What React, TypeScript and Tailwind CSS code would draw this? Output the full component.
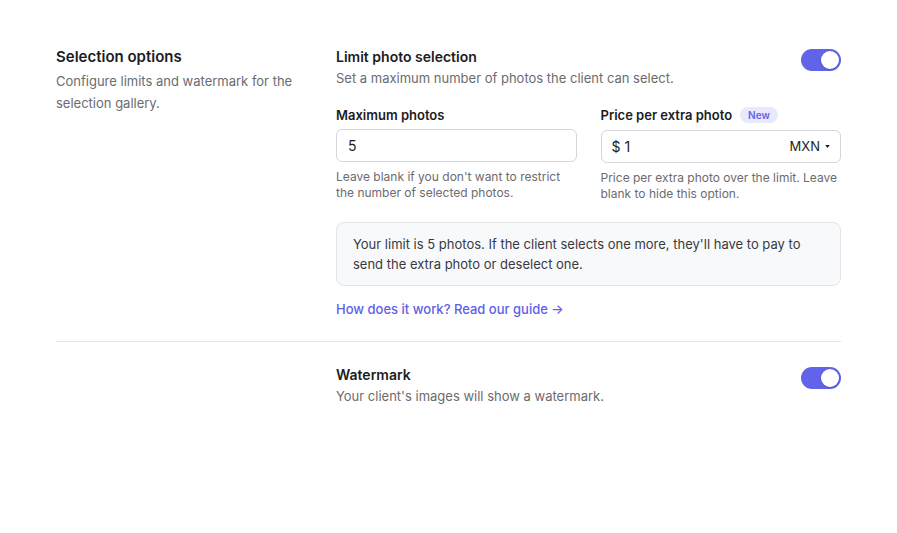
import { useState } from 'react';

function Toggle({ on, onChange }: { on: boolean; onChange: () => void }) {
  return (
    <button
      type="button"
      onClick={onChange}
      className={`relative h-[22px] w-10 shrink-0 rounded-full transition-colors ${
        on ? 'bg-[#6163e8]' : 'bg-[#d4d4d8]'
      }`}
    >
      <span
        className={`absolute top-[2px] h-[18px] w-[18px] rounded-full bg-white shadow-sm transition-all ${
          on ? 'left-[20px]' : 'left-[2px]'
        }`}
      />
    </button>
  );
}

export default function App() {
  const [limit, setLimit] = useState(true);
  const [watermark, setWatermark] = useState(true);
  const [max, setMax] = useState('5');
  const [price, setPrice] = useState('1');

  const summary = `Your limit is ${max || 0} photos. If the client selects one more, they'll have to pay to send the extra photo or deselect one.`;

  return (
    <div className="min-h-screen bg-white px-14 font-['Inter',sans-serif] text-[#1c1c1e] antialiased">
      <div className="grid grid-cols-[280px_1fr] border-b border-[#e5e5e7] pt-[47px] pb-[22px]">
        <div>
          <h2 className="text-[15px] leading-5 font-semibold">Selection options</h2>
          <p className="mt-[3px] w-[240px] text-[13px] leading-[22px] text-[#6b6b70]">
            Configure limits and watermark for the selection gallery.
          </p>
        </div>

        <div>
          <div className="flex items-start justify-between">
            <div>
              <h3 className="text-[14px] leading-5 font-semibold">Limit photo selection</h3>
              <p className="mt-[1px] text-[13px] leading-5 text-[#6b6b70]">
                Set a maximum number of photos the client can select.
              </p>
            </div>
            <div className="pt-[2px]">
              <Toggle on={limit} onChange={() => setLimit(!limit)} />
            </div>
          </div>

          <div className="mt-[17px] grid grid-cols-2 gap-6">
            <div>
              <label className="block text-[13px] leading-5 font-semibold">Maximum photos</label>
              <input
                value={max}
                onChange={(e) => setMax(e.target.value)}
                className="mt-1 h-[33px] w-full rounded-md border border-[#d6d6da] px-[11px] text-[14px] outline-none"
              />
              <p className="mt-[7px] text-[12px] leading-4 text-[#6b6b70]">
                Leave blank if you don't want to restrict the number of selected photos.
              </p>
            </div>
            <div>
              <div className="flex items-center gap-2">
                <label className="text-[13px] leading-5 font-semibold">Price per extra photo</label>
                <span className="rounded-full bg-[#e9e9fd] px-2 text-[10px] leading-4 font-semibold text-[#6163e8]">
                  New
                </span>
              </div>
              <div className="mt-[5px] flex h-[33px] items-center rounded-md border border-[#d6d6da] px-[10px] text-[14px]">
                <span>$</span>
                <input
                  value={price}
                  onChange={(e) => setPrice(e.target.value)}
                  className="ml-1 min-w-0 flex-1 outline-none"
                />
                <span className="text-[13px]">MXN</span>
                <svg viewBox="0 0 6 4" className="ml-[5px] h-[3px] w-[5px] fill-[#1c1c1e]">
                  <path d="M0 0h6L3 4z" />
                </svg>
              </div>
              <p className="mt-[7px] text-[12px] leading-4 text-[#6b6b70]">
                Price per extra photo over the limit. Leave blank to hide this option.
              </p>
            </div>
          </div>

          <div className="mt-5 rounded-lg border border-[#e5e5e9] bg-[#f8f9fb] px-4 py-[11px] text-[13px] leading-5 text-[#3a3a3e]">
            {summary}
          </div>

          <a href="#" className="mt-[13px] block text-[13px] leading-5 font-medium text-[#5d5fe6]">
            How does it work? Read our guide →
          </a>
        </div>
      </div>

      <div className="grid grid-cols-[280px_1fr] pt-[23px]">
        <div />
        <div className="flex items-start justify-between">
          <div>
            <h3 className="text-[14px] leading-5 font-semibold">Watermark</h3>
            <p className="mt-[1px] text-[13px] leading-5 text-[#6b6b70]">
              Your client's images will show a watermark.
            </p>
          </div>
          <div className="pt-[2px]">
            <Toggle on={watermark} onChange={() => setWatermark(!watermark)} />
          </div>
        </div>
      </div>
    </div>
  );
}
